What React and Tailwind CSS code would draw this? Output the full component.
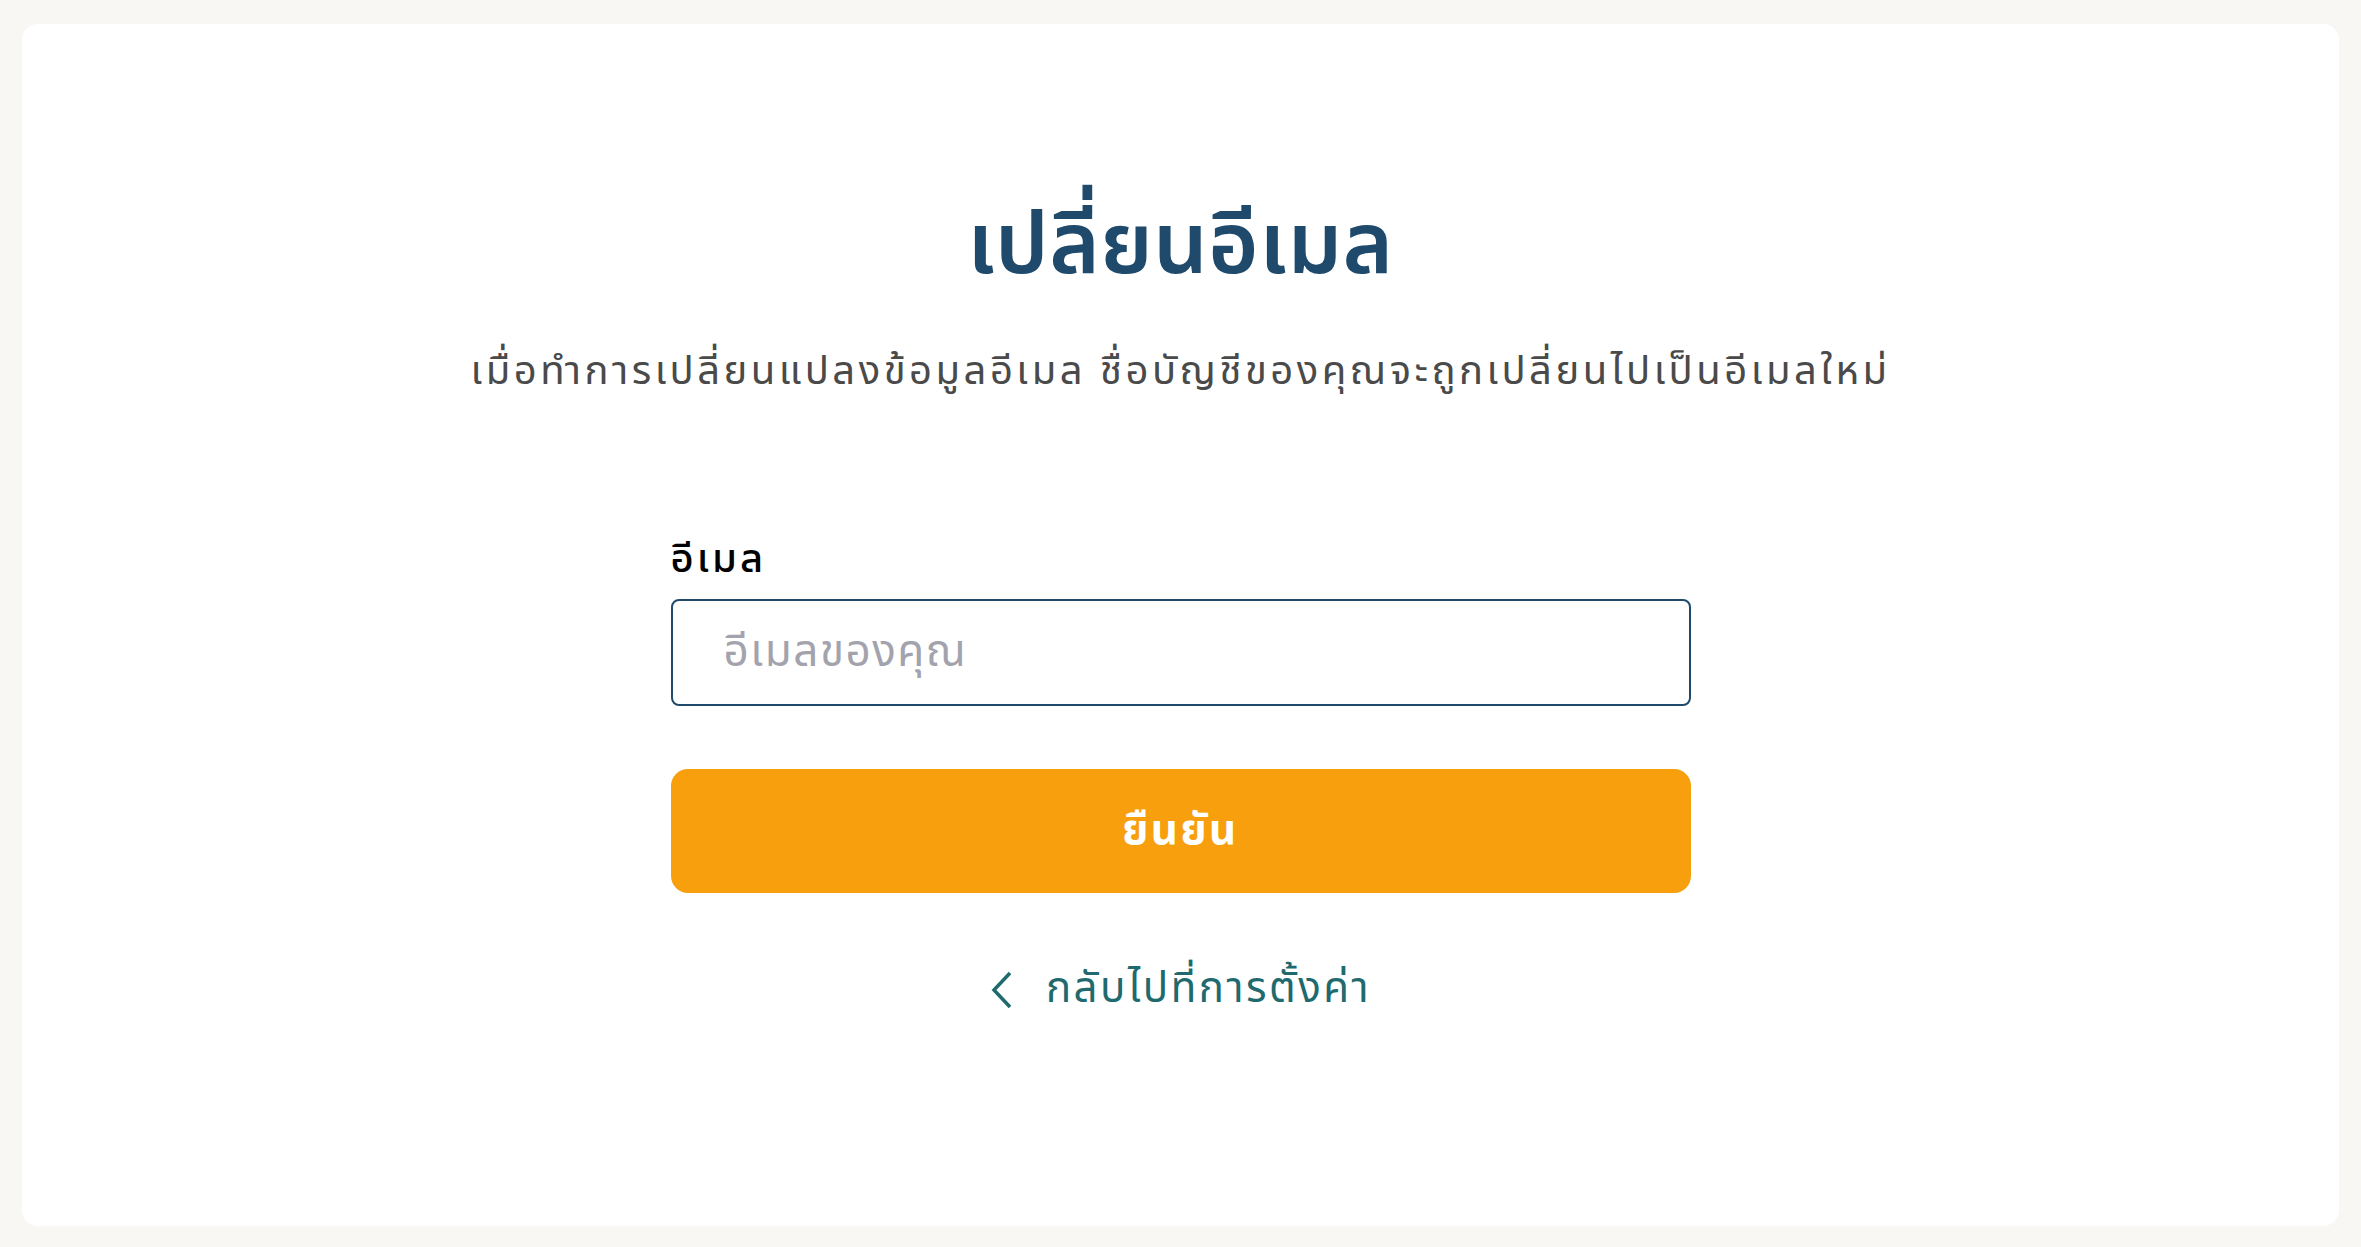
import React, { useState } from "react";

const thai = { fontFamily: '"Noto Sans Thai", "Noto Sans", sans-serif' };

export default function App() {
  const [email, setEmail] = useState("");

  return (
    <div className="min-h-screen bg-[#f8f7f3] px-[22px] pt-[24px] pb-[21px]" style={thai}>
      <div className="flex h-[1202px] flex-col items-center rounded-2xl bg-white">
        <h1 className="mt-[180px] text-[86px] font-semibold leading-none tracking-[0.5px] text-[#1f4a6b]">เปลี่ยนอีเมล</h1>
        <p className="mt-[62px] text-[40px] leading-none tracking-[3.5px] text-[#4a4a4a]">
          เมื่อทำการเปลี่ยนแปลงข้อมูลอีเมล ชื่อบัญชีของคุณจะถูกเปลี่ยนไปเป็นอีเมลใหม่
        </p>

        <form className="mt-[148px] w-[1020px]" onSubmit={(e) => e.preventDefault()}>
          <label className="block text-[40px] font-medium leading-none tracking-[3px] text-black">อีเมล</label>
          <input
            type="email"
            value={email}
            onChange={(e) => setEmail(e.target.value)}
            placeholder="อีเมลของคุณ"
            className="mt-[19px] h-[107px] w-full rounded-lg border-2 border-[#1f4a6b] px-[51px] text-[44px] tracking-[1.5px] text-gray-800 outline-none placeholder:text-[#a3a3ad]"
          />
          <button
            type="submit"
            className="mt-[63px] h-[124px] w-full rounded-[17px] bg-[#f79f0c] text-[42px] font-bold tracking-[2.5px] text-white"
          >
            ยืนยัน
          </button>
        </form>

        <button type="button" className="mt-[65px] flex items-center gap-[32px] text-[42px] tracking-[2.5px] text-[#1f6a6e]">
          <svg width="24" height="38" viewBox="0 0 24 38" fill="none" stroke="currentColor" strokeWidth="3.5">
            <path d="M20 2 L4 19 L20 36" />
          </svg>
          <span>กลับไปที่การตั้งค่า</span>
        </button>
      </div>
    </div>
  );
}
